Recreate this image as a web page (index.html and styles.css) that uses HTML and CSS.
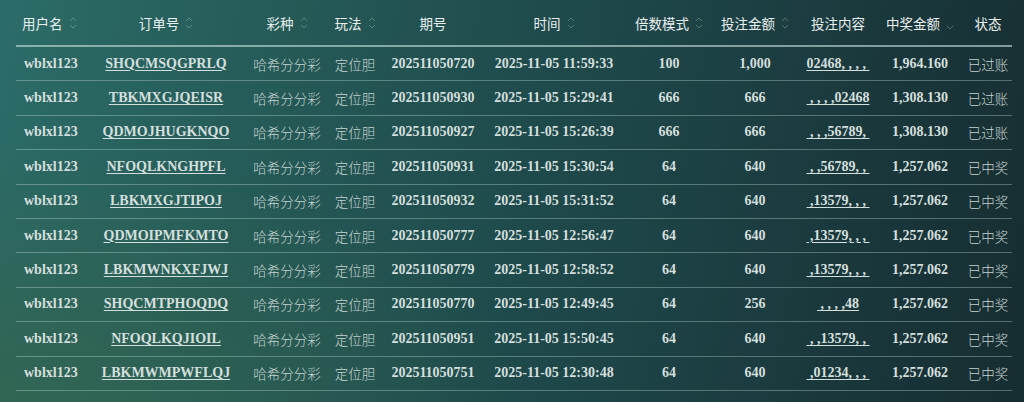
FILE: index.html
```html
<!DOCTYPE html>
<html lang="zh">
<head>
<meta charset="utf-8">
<link rel="stylesheet" href="styles.css">
</head>
<body>
<div class="page">
<table class="grid">
  <colgroup>
    <col class="c1"><col class="c2"><col class="c3"><col class="c4"><col class="c5"><col class="c6"><col class="c7"><col class="c8"><col class="c9"><col class="c10"><col class="c11">
  </colgroup>
  <thead>
    <tr>
      <th class="left"><span class="th-in">用户名<svg class="sort" viewBox="0 0 8 14"><path d="M1 5 L4 2 L7 5 M1 9 L4 12 L7 9"/></svg></span></th>
      <th><span class="th-in">订单号<svg class="sort" viewBox="0 0 8 14"><path d="M1 5 L4 2 L7 5 M1 9 L4 12 L7 9"/></svg></span></th>
      <th><span class="th-in">彩种<svg class="sort" viewBox="0 0 8 14"><path d="M1 5 L4 2 L7 5 M1 9 L4 12 L7 9"/></svg></span></th>
      <th><span class="th-in">玩法<svg class="sort" viewBox="0 0 8 14"><path d="M1 5 L4 2 L7 5 M1 9 L4 12 L7 9"/></svg></span></th>
      <th><span class="th-in">期号</span></th>
      <th><span class="th-in">时间<svg class="sort" viewBox="0 0 8 14"><path d="M1 5 L4 2 L7 5 M1 9 L4 12 L7 9"/></svg></span></th>
      <th><span class="th-in">倍数模式<svg class="sort" viewBox="0 0 8 14"><path d="M1 5 L4 2 L7 5 M1 9 L4 12 L7 9"/></svg></span></th>
      <th><span class="th-in">投注金额<svg class="sort" viewBox="0 0 8 14"><path d="M1 5 L4 2 L7 5 M1 9 L4 12 L7 9"/></svg></span></th>
      <th><span class="th-in">投注内容</span></th>
      <th><span class="th-in">中奖金额<svg class="sort down" viewBox="0 0 8 14"><path d="M1 9 L4 12 L7 9"/></svg></span></th>
      <th><span class="th-in">状态</span></th>
    </tr>
  </thead>
  <tbody>
    <tr><td class="left num">wblxl123</td><td class="num"><span class="link">SHQCMSQGPRLQ</span></td><td class="cn">哈希分分彩</td><td class="cn">定位胆</td><td class="num">202511050720</td><td class="num">2025-11-05 11:59:33</td><td class="num">100</td><td class="num">1,000</td><td class="num"><span class="link bet">02468, , , , </span></td><td class="num">1,964.160</td><td class="cn">已过账</td></tr>
    <tr><td class="left num">wblxl123</td><td class="num"><span class="link">TBKMXGJQEISR</span></td><td class="cn">哈希分分彩</td><td class="cn">定位胆</td><td class="num">202511050930</td><td class="num">2025-11-05 15:29:41</td><td class="num">666</td><td class="num">666</td><td class="num"><span class="link bet"> , , , ,02468</span></td><td class="num">1,308.130</td><td class="cn">已过账</td></tr>
    <tr><td class="left num">wblxl123</td><td class="num"><span class="link">QDMOJHUGKNQO</span></td><td class="cn">哈希分分彩</td><td class="cn">定位胆</td><td class="num">202511050927</td><td class="num">2025-11-05 15:26:39</td><td class="num">666</td><td class="num">666</td><td class="num"><span class="link bet"> , , ,56789, </span></td><td class="num">1,308.130</td><td class="cn">已过账</td></tr>
    <tr><td class="left num">wblxl123</td><td class="num"><span class="link">NFOQLKNGHPFL</span></td><td class="cn">哈希分分彩</td><td class="cn">定位胆</td><td class="num">202511050931</td><td class="num">2025-11-05 15:30:54</td><td class="num">64</td><td class="num">640</td><td class="num"><span class="link bet"> , ,56789, , </span></td><td class="num">1,257.062</td><td class="cn">已中奖</td></tr>
    <tr><td class="left num">wblxl123</td><td class="num"><span class="link">LBKMXGJTIPOJ</span></td><td class="cn">哈希分分彩</td><td class="cn">定位胆</td><td class="num">202511050932</td><td class="num">2025-11-05 15:31:52</td><td class="num">64</td><td class="num">640</td><td class="num"><span class="link bet"> ,13579, , , </span></td><td class="num">1,257.062</td><td class="cn">已中奖</td></tr>
    <tr><td class="left num">wblxl123</td><td class="num"><span class="link">QDMOIPMFKMTO</span></td><td class="cn">哈希分分彩</td><td class="cn">定位胆</td><td class="num">202511050777</td><td class="num">2025-11-05 12:56:47</td><td class="num">64</td><td class="num">640</td><td class="num"><span class="link bet"> ,13579, , , </span></td><td class="num">1,257.062</td><td class="cn">已中奖</td></tr>
    <tr><td class="left num">wblxl123</td><td class="num"><span class="link">LBKMWNKXFJWJ</span></td><td class="cn">哈希分分彩</td><td class="cn">定位胆</td><td class="num">202511050779</td><td class="num">2025-11-05 12:58:52</td><td class="num">64</td><td class="num">640</td><td class="num"><span class="link bet"> ,13579, , , </span></td><td class="num">1,257.062</td><td class="cn">已中奖</td></tr>
    <tr><td class="left num">wblxl123</td><td class="num"><span class="link">SHQCMTPHOQDQ</span></td><td class="cn">哈希分分彩</td><td class="cn">定位胆</td><td class="num">202511050770</td><td class="num">2025-11-05 12:49:45</td><td class="num">64</td><td class="num">256</td><td class="num"><span class="link bet"> , , , ,48</span></td><td class="num">1,257.062</td><td class="cn">已中奖</td></tr>
    <tr><td class="left num">wblxl123</td><td class="num"><span class="link">NFOQLKQJIOIL</span></td><td class="cn">哈希分分彩</td><td class="cn">定位胆</td><td class="num">202511050951</td><td class="num">2025-11-05 15:50:45</td><td class="num">64</td><td class="num">640</td><td class="num"><span class="link bet"> , ,13579, , </span></td><td class="num">1,257.062</td><td class="cn">已中奖</td></tr>
    <tr><td class="left num">wblxl123</td><td class="num"><span class="link">LBKMWMPWFLQJ</span></td><td class="cn">哈希分分彩</td><td class="cn">定位胆</td><td class="num">202511050751</td><td class="num">2025-11-05 12:30:48</td><td class="num">64</td><td class="num">640</td><td class="num"><span class="link bet"> ,01234, , , </span></td><td class="num">1,257.062</td><td class="cn">已中奖</td></tr>
  </tbody>
</table>
</div>
</body>
</html>
```

FILE: styles.css
```css
html, body {
  margin: 0;
  padding: 0;
}
body {
  width: 1024px;
  height: 402px;
  overflow: hidden;
  background:
    radial-gradient(ellipse 520px 260px at 0% 100%, rgba(52, 100, 78, 0.75), rgba(52, 100, 78, 0) 100%),
    linear-gradient(100deg, #2c6c68 0%, #255b58 25%, #1f4b4c 50%, #1b3c40 75%, #162d31 100%);
  font-family: "Noto Sans CJK SC", "Noto Sans", sans-serif;
}
.page {
  padding: 0 12px 0 16px;
}
.grid {
  width: 996px;
  border-collapse: collapse;
  table-layout: fixed;
}
.c1 { width: 66px; }
.c2 { width: 168px; }
.c3 { width: 74px; }
.c4 { width: 62px; }
.c5 { width: 94px; }
.c6 { width: 148px; }
.c7 { width: 82px; }
.c8 { width: 90px; }
.c9 { width: 76px; }
.c10 { width: 88px; }
.c11 { width: 48px; }

th {
  height: 45px;
  padding: 0;
  font-weight: 400;
  font-size: 13.5px;
  color: #e9efee;
  text-align: center;
  white-space: nowrap;
  border-bottom: 2px solid rgba(200, 225, 222, 0.6);
  vertical-align: middle;
}
th.left { text-align: left; padding-left: 6px; }
.th-in {
  display: inline-flex;
  align-items: center;
  gap: 6px;
}
.sort {
  width: 8px;
  height: 14px;
  fill: none;
  stroke: rgba(220, 235, 232, 0.3);
  stroke-width: 1;
}
.sort.down { margin-top: 2px; }

td {
  height: 33.4px;
  padding: 0;
  text-align: center;
  white-space: nowrap;
  color: #d4dfdd;
  border-bottom: 1px solid rgba(200, 225, 222, 0.35);
  vertical-align: middle;
}
td.left { text-align: left; padding-left: 8px; }
td.num {
  font-family: "Liberation Serif", "Noto Sans CJK SC", serif;
  font-weight: 700;
  font-size: 14px;
}
td.cn {
  font-size: 13.5px;
  font-weight: 300;
  color: #c6d2d0;
}
.link {
  text-decoration: underline;
  text-underline-offset: 2px;
}
.bet {
  white-space: pre;
}
```
